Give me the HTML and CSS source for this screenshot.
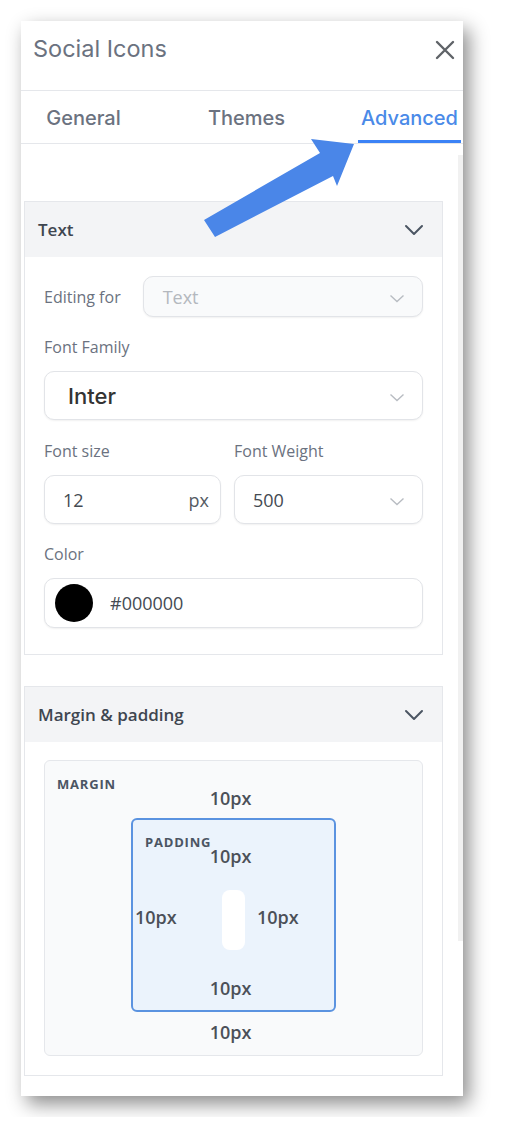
FILE: index.html
```html
<!DOCTYPE html>
<html lang="en">

<head>
    <meta charset="UTF-8">
    <meta name="viewport" content="width=device-width, initial-scale=1.0">
    <title>Social Icons</title>
    <link rel="stylesheet" href="styles.css">
</head>

<body>
    <div class="panel">

        <div class="panel-head">
            <h1 class="panel-title">Social Icons</h1>
            <svg class="close" width="20" height="20" viewBox="0 0 20 20">
                <path d="M2 2 L18 18 M18 2 L2 18" stroke="#5f6368" stroke-width="2.4" stroke-linecap="round" fill="none" />
            </svg>
        </div>

        <div class="tabs">
            <div class="tab first"><span>General</span></div>
            <div class="tab"><span>Themes</span></div>
            <div class="tab active"><span>Advanced</span></div>
        </div>

        <div class="panel-body">
            <div class="sections">

                <div class="card">
                    <div class="card-head">
                        <span>Text</span>
                        <svg width="20" height="12" viewBox="0 0 20 12">
                            <path d="M2 2 L10 10 L18 2" stroke="#4b5563" stroke-width="2" fill="none" stroke-linecap="round" stroke-linejoin="round" />
                        </svg>
                    </div>
                    <div class="card-content">

                        <div class="inline-field">
                            <label class="lbl">Editing for</label>
                            <div class="control select disabled small">
                                <span>Text</span>
                                <svg class="caret" width="16" height="9" viewBox="0 0 16 9">
                                    <path d="M1.5 1.5 L8 7.5 L14.5 1.5" stroke="#b8bcc2" stroke-width="1.4" fill="none" />
                                </svg>
                            </div>
                        </div>

                        <div class="field">
                            <label class="lbl">Font Family</label>
                            <div class="control select family">
                                <span>Inter</span>
                                <svg class="caret" width="16" height="9" viewBox="0 0 16 9">
                                    <path d="M1.5 1.5 L8 7.5 L14.5 1.5" stroke="#b8bcc2" stroke-width="1.4" fill="none" />
                                </svg>
                            </div>
                        </div>

                        <div class="field-pair">
                            <div class="field">
                                <label class="lbl">Font size</label>
                                <div class="control size">
                                    <span>12</span>
                                    <span class="unit">px</span>
                                </div>
                            </div>
                            <div class="field">
                                <label class="lbl">Font Weight</label>
                                <div class="control select weight">
                                    <span>500</span>
                                    <svg class="caret" width="16" height="9" viewBox="0 0 16 9">
                                        <path d="M1.5 1.5 L8 7.5 L14.5 1.5" stroke="#b8bcc2" stroke-width="1.4" fill="none" />
                                    </svg>
                                </div>
                            </div>
                        </div>

                        <div class="field">
                            <label class="lbl">Color</label>
                            <div class="control color">
                                <span class="swatch"></span>
                                <span>#000000</span>
                            </div>
                        </div>

                    </div>
                </div>

                <div class="card">
                    <div class="card-head">
                        <span>Margin &amp; padding</span>
                        <svg width="20" height="12" viewBox="0 0 20 12">
                            <path d="M2 2 L10 10 L18 2" stroke="#4b5563" stroke-width="2" fill="none" stroke-linecap="round" stroke-linejoin="round" />
                        </svg>
                    </div>
                    <div class="card-content spacing">
                        <div class="margin-box">
                            <span class="box-tag margin-tag">MARGIN</span>
                            <span class="val">10px</span>
                            <div class="padding-box">
                                <span class="box-tag padding-tag">PADDING</span>
                                <span class="val">10px</span>
                                <div class="mid-row">
                                    <span class="val left">10px</span>
                                    <span class="pill"></span>
                                    <span class="val right">10px</span>
                                </div>
                                <span class="val">10px</span>
                            </div>
                            <span class="val">10px</span>
                        </div>
                    </div>
                </div>

            </div>
            <div class="scroll-track"></div>
        </div>

        <svg class="arrow" width="505" height="260" viewBox="0 0 505 260">
            <polygon points="204,220 320,153 311,139 354,144 337,186 333,176 215,237" fill="#4a86e8" />
        </svg>

    </div>
</body>

</html>
```

FILE: styles.css
```css
body {
    margin: 0;
    padding: 21px;
    background-color: #ffffff;
    font-family: "Open Sans", "Noto Sans", sans-serif;
    color: #374151;
}

.panel {
    width: 442px;
    height: 1075px;
    background-color: #ffffff;
    box-shadow: 6px 8px 18px rgba(0, 0, 0, 0.45);
    display: flex;
    flex-direction: column;
    overflow: hidden;
}

.panel-head {
    height: 70px;
    display: flex;
    justify-content: space-between;
    align-items: flex-start;
    padding: 13px 8px 0 12px;
    border-bottom: 1px solid #e5e7eb;
    box-sizing: border-box;
}

.panel-title {
    margin: 0;
    font-family: Inter, sans-serif;
    font-size: 23.5px;
    font-weight: 400;
    line-height: 30px;
    color: #6b7280;
}

.close {
    margin-top: 6px;
}

.tabs {
    height: 53px;
    display: flex;
    border-bottom: 1px solid #e5e7eb;
    box-sizing: border-box;
}

.tab {
    width: 163px;
    flex-shrink: 0;
    display: flex;
    justify-content: center;
    font-family: Inter, sans-serif;
    font-size: 20px;
    font-weight: 500;
    color: #6b7280;
}

.tab.first {
    margin-left: -19px;
}

.tab span {
    padding: 6px 3px 0 3px;
    line-height: 43px;
    border-bottom: 3px solid transparent;
}

.tab.active span {
    color: #4a8ae8;
    border-bottom-color: #3b82f6;
}

.panel-body {
    flex: 1;
    display: flex;
    padding-left: 3px;
}

.sections {
    width: 419px;
    padding-top: 57px;
    display: flex;
    flex-direction: column;
    gap: 31px;
}

.scroll-track {
    width: 5px;
    height: 786px;
    margin-top: 11px;
    margin-left: auto;
    background-color: #f1f1f1;
}

.card {
    border: 1px solid #e5e7eb;
    background-color: #ffffff;
}

.card-head {
    height: 55px;
    background-color: #f3f4f6;
    display: flex;
    align-items: center;
    justify-content: space-between;
    padding: 0 18px 0 13px;
    font-size: 17px;
    font-weight: 600;
    color: #3f4650;
}

.card-content {
    padding: 19px 19px 26px 19px;
    display: flex;
    flex-direction: column;
    gap: 19px;
}

.card-content.spacing {
    padding: 18px 19px 19px 19px;
}

.lbl {
    display: block;
    font-size: 16px;
    line-height: 22px;
    color: #6b7280;
}

.field .lbl {
    margin-bottom: 13px;
}

.inline-field {
    display: flex;
    align-items: center;
    gap: 22px;
}

.inline-field .control {
    flex: 1;
}

.field-pair {
    display: grid;
    grid-template-columns: 177fr 189fr;
    gap: 13px;
    margin-top: 1px;
}

.control {
    height: 49px;
    border: 1px solid #e2e4e8;
    border-radius: 10px;
    box-shadow: 0 1px 2px rgba(0, 0, 0, 0.06);
    display: flex;
    align-items: center;
    padding: 0 17px 0 18px;
    box-sizing: border-box;
    font-size: 18px;
    color: #444a52;
    background-color: #ffffff;
}

.control.small {
    height: 41px;
}

.control.disabled {
    background-color: #f9fafb;
    color: #b4b8be;
    padding-left: 19px;
}

.select {
    justify-content: space-between;
}

.caret {
    margin-top: 4px;
}

.family {
    padding-left: 23px;
    font-family: Inter, sans-serif;
    font-size: 22px;
    font-weight: 500;
    color: #333333;
}

.size {
    justify-content: space-between;
    padding-right: 11px;
}

.unit {
    color: #555b63;
}

.color {
    height: 50px;
    padding-left: 10px;
    gap: 17px;
}

.swatch {
    width: 38px;
    height: 38px;
    border-radius: 50%;
    background-color: #000000;
}

.margin-box {
    position: relative;
    height: 296px;
    box-sizing: border-box;
    border: 1px solid #e5e7eb;
    border-radius: 6px;
    background-color: #f9fafb;
    display: flex;
    flex-direction: column;
    align-items: center;
    padding-top: 25px;
    gap: 8px;
}

.box-tag {
    position: absolute;
    font-size: 13px;
    font-weight: 700;
    letter-spacing: 0.8px;
    color: #4b5563;
}

.margin-tag {
    top: 14px;
    left: 12px;
}

.padding-tag {
    top: 13px;
    left: 12px;
}

.val {
    font-size: 18px;
    font-weight: 600;
    line-height: 24px;
    color: #4b5058;
    padding-right: 6px;
}

.padding-box {
    position: relative;
    width: 205px;
    height: 194px;
    box-sizing: border-box;
    border: 2px solid #5b93e0;
    border-radius: 6px;
    background-color: #ebf3fc;
    display: flex;
    flex-direction: column;
    align-items: center;
    padding-top: 24px;
}

.mid-row {
    width: 100%;
    display: grid;
    grid-template-columns: 1fr auto 1fr;
    align-items: center;
    margin-top: 18px;
    margin-bottom: 26px;
}

.mid-row .val {
    margin-bottom: 2px;
}

.mid-row .left {
    justify-self: start;
    padding-left: 2px;
}

.mid-row .right {
    justify-self: start;
    margin-left: 12px;
}

.pill {
    width: 23px;
    height: 60px;
    border-radius: 8px;
    background-color: #ffffff;
    margin-top: 4px;
}

.arrow {
    position: absolute;
    top: 0;
    left: 0;
    pointer-events: none;
}
```
